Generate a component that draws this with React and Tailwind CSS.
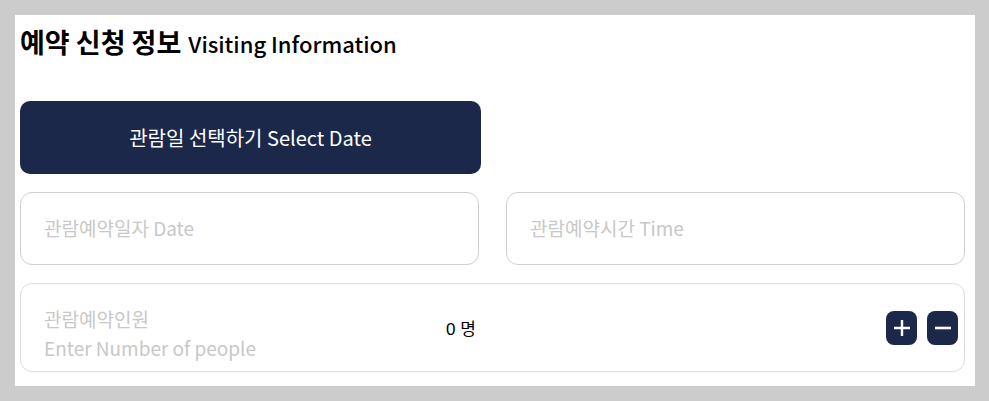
import { useState } from "react";

const font = { fontFamily: '"Noto Sans CJK KR", "Noto Sans", sans-serif' };

const Field = ({ placeholder }) => (
  <div className="flex-1 h-[73px] border border-[#cfcfcf] rounded-[12px] flex items-center px-[23px]">
    <span className="text-[19px] text-[#c8c8c8]">{placeholder}</span>
  </div>
);

const App = () => {
  const [count, setCount] = useState(0);

  return (
    <div className="w-[989px] h-[401px] bg-[#cccccc] p-[15px]" style={font}>
      <div className="bg-white h-full w-[960px] pl-[5px] pr-[10px] pt-[9px]">
        <h2 className="text-black leading-[36px] h-[36px] flex items-baseline">
          <span className="text-[27px] font-bold">예약 신청 정보</span>
          <span className="text-[22px] font-medium ml-[7px]">Visiting Information</span>
        </h2>

        <button className="mt-[41px] w-[461px] h-[73px] rounded-[10px] bg-[#1b2849] text-white text-[20px] flex items-center justify-center">
          관람일 선택하기 Select Date
        </button>

        <div className="flex gap-[27px] mt-[18px]">
          <Field placeholder="관람예약일자 Date" />
          <Field placeholder="관람예약시간 Time" />
        </div>

        <div className="mt-[18px] h-[89px] border border-[#dcdcdc] rounded-[12px] flex items-center pl-[23px] pr-[6px]">
          <div className="w-[300px] text-[19px] text-[#c8c8c8] leading-[29px] pt-[10px]">
            <div>관람예약인원</div>
            <div>Enter Number of people</div>
          </div>
          <div
            className="ml-[102px] mt-[4px] text-[17px] text-black"
            style={{ fontFamily: '"Liberation Sans", "Noto Sans CJK KR", sans-serif' }}
          >
            {count} 명
          </div>
          <div className="ml-auto flex gap-[10px]">
            <button
              onClick={() => setCount(count + 1)}
              className="w-[31px] h-[34px] rounded-[8px] bg-[#1b2849] flex items-center justify-center"
            >
              <svg width="18" height="18" viewBox="0 0 18 18">
                <path d="M9 1v16M1 9h16" stroke="white" strokeWidth="2.4" />
              </svg>
            </button>
            <button
              onClick={() => setCount(Math.max(0, count - 1))}
              className="w-[31px] h-[34px] rounded-[8px] bg-[#1b2849] flex items-center justify-center"
            >
              <svg width="18" height="18" viewBox="0 0 18 18">
                <path d="M1 9h16" stroke="white" strokeWidth="2.6" />
              </svg>
            </button>
          </div>
        </div>
      </div>
    </div>
  );
};

export default App;
